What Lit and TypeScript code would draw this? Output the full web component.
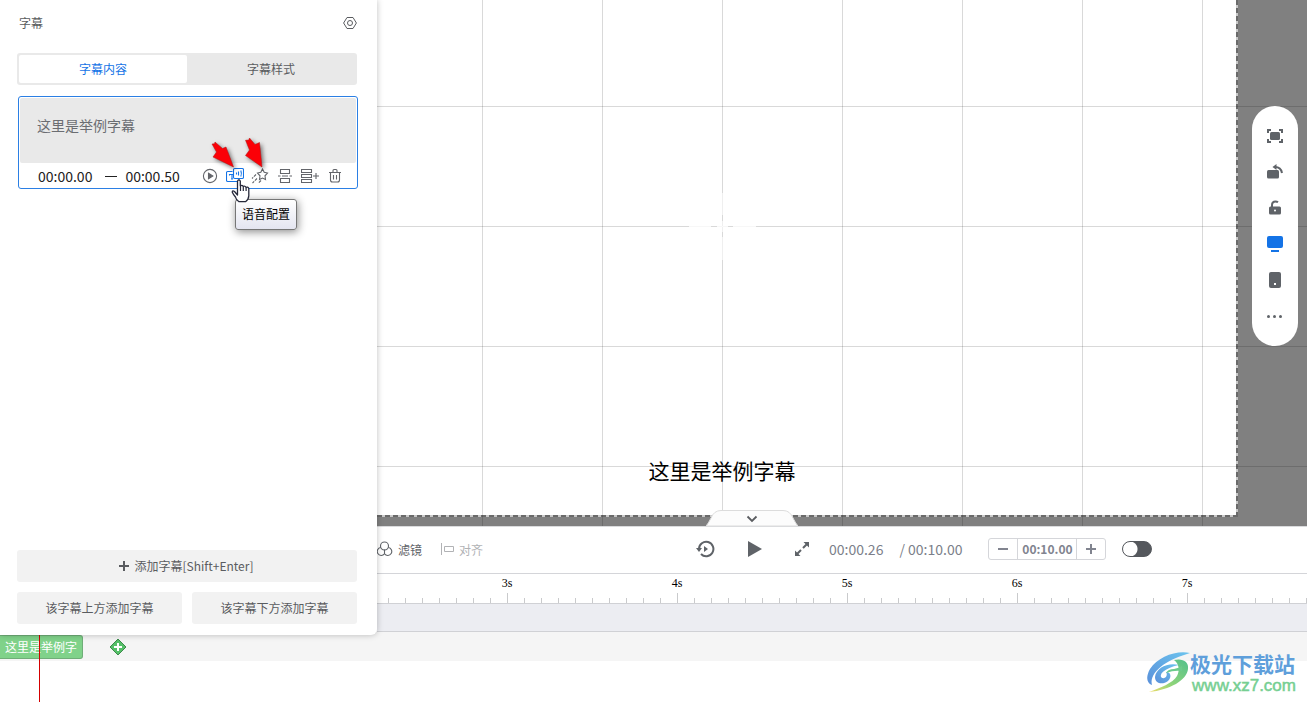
import { LitElement, html, css, svg } from "lit";
import { customElement, property, state } from "lit/decorators.js";
import { classMap } from "lit/directives/class-map.js";

const rowIcons = [
  {
    name: "播放",
    art: svg`<circle cx="9" cy="9" r="6.6"/><path d="M7.5 6.3v5.4L11.8 9z" fill="currentColor"/>`,
  },
  {
    name: "语音配置",
    art: svg`<path d="M6.5 4.500H1.700Q.5 4.500 .5 5.700v7.600q0 1.200 1.200 1.200h10.100q1.200 0 1.200-1.200V12.500"/><path d="M3.500 8.500v-1h5v1M6 7.500v4.500M5 12h2"/><rect x="7.500" y="1.500" width="10" height="10" rx="1.200" fill="#fff"/><path d="M10.500 5.500v2M12.500 4.500v4M14.800 3.500q1.200 3 0 6"/>`,
  },
  {
    name: "特效",
    art: svg`<path d="M11.500 2l1.700 3.300 3.300.7-2.500 2.800.5 3.700-3-1.500-3 1.500.5-3.700L6.500 6l3.300-.7z"/><path d="M5 7.500L1 11.500M6 11.500l-4.500 4.500M10 13.500L7.500 16" stroke-dasharray="3 1"/>`,
  },
  {
    name: "拆分",
    art: svg`<path d="M4.500 6.500v-4h9v4zM4.500 15.500v-4h9v4zM2 9h2.500M6 9h6M13.500 9H16"/>`,
  },
  {
    name: "合并",
    art: svg`<path d="M.5 2.500h10v3h-10zM.5 7.500h10v3h-10zM.5 12.500h10v3h-10zM12 9h6M15 6v6"/>`,
  },
  {
    name: "删除",
    art: svg`<path d="M3 5.500h12M7 5.500v-2q0-1 1-1h2q1 0 1 1v2M4.500 5.500v7.500q0 2 2 2h5q2 0 2-2V5.500M7.500 8v4.500M10.500 8v4.500"/>`,
  },
];

const toolIcons = [
  {
    name: "适应画布",
    art: svg`<rect x="4" y="5" width="10" height="8" rx="1.500"/><path d="M2 6V3h3M13 3h3v3M16 12v3h-3M5 15H2v-3" fill="none" stroke="currentColor" stroke-width="2"/>`,
  },
  {
    name: "旋转",
    art: svg`<rect x="1" y="7" width="12" height="8.500" rx="1.500"/><path d="M9 4q6 0 7 6" fill="none" stroke="currentColor" stroke-width="2"/><path d="M6.500 4L10.500 1v6z"/>`,
  },
  {
    name: "解锁",
    art: svg`<path d="M6 8V6q0-3.500 3.500-3.500 1.500 0 2.500.8" fill="none" stroke="currentColor" stroke-width="2"/><rect x="3" y="7.500" width="12" height="8" rx="1.500"/><circle cx="9" cy="11.500" r="1" fill="#fff"/>`,
  },
  {
    name: "电脑",
    art: svg`<rect x="1" y="1" width="16" height="12" rx="2"/><path d="M5 15h8v2H5z"/>`,
  },
  {
    name: "手机",
    art: svg`<rect x="3" y="1" width="12" height="16" rx="2"/><rect x="8" y="12" width="2" height="2" fill="#fff"/>`,
  },
  {
    name: "更多",
    art: svg`<circle cx="2.500" cy="9.500" r="1.500"/><circle cx="8.500" cy="9.500" r="1.500"/><circle cx="14.500" cy="9.500" r="1.500"/>`,
  },
];

const base = css`
  * {
    box-sizing: border-box;
  }
  button {
    border: 0;
    padding: 0;
    margin: 0;
    background: none;
    color: inherit;
    font: inherit;
    cursor: pointer;
  }
  svg {
    display: block;
  }
`;

@customElement("subtitle-panel")
export class SubtitlePanel extends LitElement {
  static styles = [
    base,
    css`
      :host {
        display: flex;
        flex-direction: column;
        padding: 0 20px 11px 17px;
        background: #fff;
        border-bottom-right-radius: 6px;
        box-shadow: 0 0 6px rgba(0, 0, 0, 0.25);
        color: #5a5c60;
        font-size: 12px;
      }
      .head {
        display: flex;
        align-items: center;
        justify-content: space-between;
        height: 45px;
        padding-left: 2px;
        margin-bottom: 8px;
      }
      .head h2 {
        margin: 0;
        font-size: 12px;
        font-weight: 400;
      }
      .tabs {
        display: flex;
        height: 32px;
        padding: 2px;
        border-radius: 3px;
        background: #e9e9e9;
        margin-bottom: 11px;
      }
      .tabs button {
        flex: 1;
        padding-bottom: 2px;
        border-radius: 2px;
      }
      .tabs .active {
        background: #fff;
        color: #1473e6;
      }
      .card {
        position: relative;
        border: 1px solid #2b7fe4;
        border-radius: 3px;
        padding: 1px;
        margin: 0 -1px 0 1px;
        height: 93px;
      }
      .card textarea {
        display: block;
        width: 100%;
        height: 65px;
        margin: 0;
        padding: 17px 17px;
        border: 0;
        outline: 0;
        resize: none;
        overflow: hidden;
        border-radius: 2px;
        background: #e9e9e9;
        color: #6b6d72;
        font: inherit;
        font-size: 14px;
        line-height: 20px;
      }
      .meta {
        display: flex;
        align-items: center;
        height: 26px;
        padding: 0 12px 0 18px;
        color: #222;
        font-size: 14px;
      }
      .dash {
        width: 12px;
        height: 1px;
        margin: 0 8px 0 13px;
        background: #222;
      }
      .acts {
        display: flex;
        gap: 7px;
        margin-left: auto;
        color: #63656a;
      }
      .acts .hot {
        color: #1473e6;
      }
      .arrows,
      .cursor,
      .tip {
        position: absolute;
        pointer-events: none;
      }
      .arrows {
        left: 188px;
        top: 37px;
        filter: drop-shadow(2px 2px 2px rgba(0, 0, 0, 0.5));
      }
      .cursor {
        left: 212px;
        top: 81px;
        z-index: 2;
      }
      .tip {
        left: 216px;
        top: 102px;
        padding: 5px 6px 7px;
        border: 1px solid #767676;
        border-radius: 3px;
        background: linear-gradient(#fff, #e4e5f0);
        box-shadow: 1px 2px 8px rgba(0, 0, 0, 0.45);
        color: #000;
        line-height: 17px;
      }
      .foot {
        display: grid;
        grid-template-columns: 1fr 1fr;
        gap: 10px;
        margin-top: auto;
      }
      .foot button {
        display: flex;
        align-items: center;
        justify-content: center;
        gap: 5px;
        height: 32px;
        padding-bottom: 1px;
        border-radius: 3px;
        background: #f2f2f2;
      }
      .foot .wide {
        grid-column: 1 / -1;
        padding-right: 3px;
      }
    `,
  ];

  @state() private tab = 0;

  render() {
    return html`
      <header class="head">
        <h2>字幕</h2>
        <button aria-label="设置">
          <svg width="14" height="14" viewBox="0 0 14 14" fill="none" stroke="currentColor">
            <path d="M4 1.500h6L13.400 7 10 12.500H4L.6 7z" stroke-linejoin="round" />
            <circle cx="7" cy="7" r="2.500" />
          </svg>
        </button>
      </header>
      <div class="tabs" role="tablist">
        ${["字幕内容", "字幕样式"].map(
          (t, i) => html`<button
            role="tab"
            aria-selected=${this.tab === i}
            class=${classMap({ active: this.tab === i })}
            @click=${() => (this.tab = i)}
          >${t}</button>`
        )}
      </div>
      <section class="card">
        <textarea aria-label="字幕文本" .value=${"这里是举例字幕"}></textarea>
        <div class="meta">
          <span>00:00.00</span><span class="dash"></span><span>00:00.50</span>
          <div class="acts">
            ${rowIcons.map(
              (r, i) => html`<button class=${classMap({ hot: i === 1 })} aria-label=${r.name}>
                <svg width="18" height="18" viewBox="0 0 18 18" fill="none" stroke="currentColor" stroke-width="1.100">${r.art}</svg>
              </button>`
            )}
          </div>
        </div>
        <svg class="arrows" width="66" height="38" viewBox="0 0 66 38">
          <g fill="#fb0007" stroke="#b01212" stroke-width=".5">
            <path d="M26.500 33L19 13l-3.500 1.500L8 8l-.5 1.700L5 10l4.500 8L6 23z" />
            <path d="M55 33L52.500 8.500 48 10.500 42.500 4l-.7 2-3.300.3L42.500 16l-4 5.500z" />
          </g>
        </svg>
        <svg class="cursor" width="20" height="26" viewBox="0 0 20 26">
          <path
            d="M6.500 17L3.500 13.500Q1.500 12 1.200 14q1 2.500 3.300 5 .5 3 3.500 4.700h6.500q3-2 3.300-6V10.300q-1.200-2-2.800-.8-1-2-2.800-1-1-1.700-2.900-.7V3q-1.400-2.200-2.800 0z"
            fill="#fff" stroke="#26283a" stroke-width="1.300" stroke-linejoin="round"
          />
          <path d="M9.500 8v5M12.300 9v4M15.100 10v3" stroke="#26283a" stroke-width="1.200" />
        </svg>
        <div class="tip" role="tooltip">语音配置</div>
      </section>
      <footer class="foot">
        <button class="wide">
          <svg width="12" height="12" viewBox="0 0 12 12"><path d="M6 1v10M1 6h10" stroke="currentColor" stroke-width="2" /></svg>
          <span>添加字幕[Shift+Enter]</span>
        </button>
        <button>该字幕上方添加字幕</button>
        <button>该字幕下方添加字幕</button>
      </footer>
    `;
  }
}

@customElement("canvas-stage")
export class CanvasStage extends LitElement {
  static styles = [
    base,
    css`
      :host {
        position: relative;
        display: flex;
        padding: 0 69px 9px 0;
        background: #808080;
        overflow: hidden;
      }
      :host::after {
        content: "";
        position: absolute;
        inset: 0;
        pointer-events: none;
        background-image: linear-gradient(90deg, rgba(0, 0, 0, 0.15) 1px, transparent 1px),
          linear-gradient(rgba(0, 0, 0, 0.15) 1px, transparent 1px);
        background-size: 120px 120px;
        background-position: 105px 106px;
      }
      .canvas {
        flex: 1;
        position: relative;
        background: #fff;
      }
      .edge {
        position: absolute;
        right: 0;
        bottom: 0;
      }
      .right {
        top: 0;
        width: 2px;
        background: repeating-linear-gradient(#6a6a6a 0 5px, #c8c8c8 5px 8px);
      }
      .bottom {
        left: 0;
        height: 2px;
        background: repeating-linear-gradient(90deg, #6a6a6a 0 5px, #c8c8c8 5px 8px);
      }
      .center {
        position: absolute;
        z-index: 1;
        left: 312px;
        top: 193px;
      }
      .caption {
        position: absolute;
        z-index: 1;
        left: 345px;
        bottom: 31px;
        transform: translateX(-50%);
        color: #000;
        font-size: 21px;
        line-height: 32px;
        white-space: nowrap;
      }
      .tools {
        position: absolute;
        z-index: 2;
        right: 9px;
        top: 106px;
        display: flex;
        flex-direction: column;
        align-items: center;
        gap: 18px;
        width: 46px;
        padding: 21px 0;
        border-radius: 23px;
        background: #fff;
        color: #5f6368;
      }
      .tools .on {
        color: #1473e6;
      }
      .fold {
        position: absolute;
        z-index: 2;
        left: 329px;
        bottom: 0;
      }
    `,
  ];

  render() {
    return html`
      <div class="canvas">
        <div class="edge right"></div>
        <div class="edge bottom"></div>
        <div class="caption">这里是举例字幕</div>
      </div>
      <svg class="center" width="67" height="67" viewBox="0 0 67 67" stroke="#fff">
        <path d="M0 33.500h22M28 33.500h11M44 33.500h23" opacity=".8" />
        <path d="M33.500 0v22M33.500 28v11M33.500 44v23" opacity=".6" />
      </svg>
      <nav class="tools">
        ${toolIcons.map(
          (t, i) => html`<button class=${classMap({ on: i === 3 })} aria-label=${t.name}>
            <svg width="18" height="18" viewBox="0 0 18 18" fill="currentColor">${t.art}</svg>
          </button>`
        )}
      </nav>
      <button class="fold" aria-label="收起">
        <svg width="92" height="16" viewBox="0 0 92 16">
          <path d="M0 16Q2 14 5 8 8 .5 15 .5h62q7 0 10 7.500 3 6 5 8z" fill="#fcfcfc" stroke="#dcdcdc" />
          <path d="M41.500 6.500L46 11l4.500-4.500" fill="none" stroke="#5a5c60" stroke-width="1.800" />
        </svg>
      </button>
    `;
  }
}

@customElement("transport-bar")
export class TransportBar extends LitElement {
  static styles = [
    base,
    css`
      :host {
        display: flex;
        align-items: center;
        box-sizing: border-box;
        padding-bottom: 2px;
        border-top: 1px solid #dadbdd;
        border-bottom: 1px solid #d4d5d9;
        background: #fff;
        color: #5f6368;
        white-space: nowrap;
        overflow: hidden;
      }
      button {
        display: flex;
        align-items: center;
        gap: 5px;
        flex: none;
      }
      .left {
        display: flex;
        flex: 0 0 318px;
        gap: 18px;
      }
      .left .off {
        color: #b1b2b5;
      }
      .play {
        display: flex;
        align-items: center;
        gap: 33px;
        margin-right: 20px;
      }
      .time {
        display: flex;
        gap: 16px;
        margin-right: 26px;
        color: #7c7f8a;
        font-size: 14px;
      }
      .zoom {
        display: flex;
        height: 22px;
        margin-right: 16px;
        border: 1px solid #d5d6da;
        border-radius: 3px;
        color: #81848f;
        font-size: 12px;
        font-weight: 700;
      }
      .zoom button {
        justify-content: center;
        width: 28px;
      }
      .zoom output {
        width: 60px;
        border: solid #d5d6da;
        border-width: 0 1px;
        line-height: 20px;
        text-align: center;
      }
      .switch {
        appearance: none;
        flex: none;
        width: 30px;
        height: 16px;
        margin: 0;
        border: 1px solid #55585d;
        border-radius: 8px;
        background: radial-gradient(circle at 7px 7px, #fff 7px, #55585d 8px);
      }
    `,
  ];

  render() {
    return html`
      <div class="left">
        <button>
          <svg width="16" height="16" viewBox="0 0 16 16" fill="none" stroke="currentColor" stroke-width="1.100">
            <circle cx="7.500" cy="5" r="4" /><path d="M3.700 6.500a4 4 0 1 0 3.800 6.300 4 4 0 1 0 3.800-6.300M7.500 8.500v4.500" />
          </svg>
          <span>滤镜</span>
        </button>
        <button class="off" disabled>
          <svg width="14" height="14" viewBox="0 0 14 14" fill="none" stroke="currentColor"><path d="M1.500 1v12M4.500 4.500h9v5h-9z" /></svg>
          <span>对齐</span>
        </button>
      </div>
      <div class="play">
        <button aria-label="重播">
          <svg width="20" height="18" viewBox="0 0 20 18" fill="none" stroke="currentColor" stroke-width="2">
            <path d="M4 9a7.200 7.200 0 1 1 2 5" /><path d="M1 8h6L4 12zM9 6v6l4-3z" fill="currentColor" stroke="none" />
          </svg>
        </button>
        <button aria-label="播放">
          <svg width="14" height="16" viewBox="0 0 14 16"><path d="M0 0v16l14-8z" fill="currentColor" /></svg>
        </button>
        <button aria-label="全屏">
          <svg width="14" height="14" viewBox="0 0 14 14" fill="currentColor">
            <path d="M8.500 0H14v5.500zM0 8.500V14h5.500z" /><path d="M8 6l4-4M2 12l4-4" stroke="currentColor" stroke-width="2" />
          </svg>
        </button>
      </div>
      <div class="time"><span>00:00.26</span><span>/ 00:10.00</span></div>
      <div class="zoom">
        <button aria-label="缩小"><svg width="12" height="12"><path d="M1 6h10" stroke="currentColor" stroke-width="2" /></svg></button>
        <output>00:10.00</output>
        <button aria-label="放大"><svg width="12" height="12"><path d="M1 6h10M6 1v10" stroke="currentColor" stroke-width="2" /></svg></button>
      </div>
      <input class="switch" type="checkbox" role="switch" aria-label="吸附" />
    `;
  }
}

@customElement("time-ruler")
export class TimeRuler extends LitElement {
  @property({ type: Number }) from = 3;
  @property({ type: Number }) to = 7;

  static styles = css`
    :host {
      display: flex;
      overflow: hidden;
      background: #fff;
      border-bottom: 1px solid #d0d1d5;
    }
    .lead,
    .rest,
    .second {
      background: repeating-linear-gradient(90deg, #c9cacc 0 1px, transparent 1px 17px) 0 100% / 170px 5px repeat-x;
    }
    .lead {
      flex: 0 0 45px;
      background-position: 100% 100%;
    }
    .rest {
      flex: 1;
    }
    .second {
      flex: none;
      width: 170px;
      font: 12px/14px "Liberation Serif", serif;
      color: #000;
      text-align: center;
      padding-top: 2px;
      background: linear-gradient(#c9cacc, #c9cacc) 85px 100% / 1px 10px no-repeat,
        repeating-linear-gradient(90deg, #c9cacc 0 1px, transparent 1px 17px) 0 100% / 170px 5px no-repeat;
    }
  `;

  render() {
    const seconds = Array.from({ length: this.to - this.from + 1 }, (_, i) => this.from + i);
    return html`
      <div class="lead"></div>
      ${seconds.map((s) => html`<div class="second">${s}s</div>`)}
      <div class="rest"></div>
    `;
  }
}

@customElement("app-root")
export class AppRoot extends LitElement {
  static styles = [
    base,
    css`
      :host {
        display: grid;
        grid-template-columns: 377px minmax(0, 1fr);
        grid-template-rows: minmax(0, 1fr) 48px 30px 28px 29px 41px;
        height: 100vh;
        overflow: hidden;
        background: #fff;
        font-family: "Noto Sans CJK SC", sans-serif;
        font-size: 12px;
      }
      subtitle-panel {
        grid-area: 1 / 1 / 5 / 2;
        margin-bottom: -3px;
        z-index: 3;
      }
      canvas-stage {
        grid-area: 1 / 2;
      }
      transport-bar {
        grid-area: 2 / 2;
      }
      time-ruler {
        grid-area: 3 / 2;
      }
      .lane {
        grid-area: 4 / 2;
        background: #ecedf2;
        border-bottom: 1px solid #d0d1d5;
      }
      .track {
        grid-area: 5 / 1 / 6 / 3;
        display: flex;
        align-items: center;
        gap: 26px;
        padding-top: 1px;
        background: #f5f5f5;
      }
      .clip {
        width: 83px;
        height: 24px;
        padding: 0 0 1px 5px;
        border: 1px solid #6fae78;
        border-left: 0;
        border-radius: 0 3px 3px 0;
        background: #80d28a;
        color: #fff;
        text-align: left;
      }
      .playhead {
        grid-area: 5 / 1 / 7 / 2;
        width: 1px;
        margin: 3px 0 0 39px;
        background: #d40000;
      }
      .brand {
        grid-area: 5 / 2 / 7 / 3;
        justify-self: end;
        align-self: end;
        display: flex;
        align-items: center;
        margin: 0 11px 7px 0;
      }
      .brand p {
        margin: 0;
        color: #5f9fdb;
        font-size: 21px;
        font-weight: 700;
        line-height: 28px;
      }
      .brand a {
        display: block;
        padding-left: 2px;
        color: #76cf92;
        font: 17px/18px "Liberation Sans", sans-serif;
        -webkit-text-stroke: 0.500px #76cf92;
        text-decoration: none;
      }
    `,
  ];

  render() {
    return html`
      <subtitle-panel></subtitle-panel>
      <canvas-stage></canvas-stage>
      <transport-bar></transport-bar>
      <time-ruler from="3" to="7"></time-ruler>
      <div class="lane"></div>
      <div class="track">
        <button class="clip">这里是举例字</button>
        <button aria-label="添加片段">
          <svg width="18" height="18" viewBox="0 0 18 18">
            <path d="M9 1l8 8-8 8-8-8z" fill="#55bf68" stroke="#3d8b4b" stroke-linejoin="round" />
            <path d="M9 5v8M5 9h8" stroke="#fff" stroke-width="2" />
          </svg>
        </button>
      </div>
      <div class="playhead"></div>
      <div class="brand">
        <svg width="44" height="42" viewBox="0 0 44 42">
          <defs>
            <linearGradient id="sky" x1="1" y1="0" x2="0" y2="1">
              <stop offset="0" stop-color="#6cc4ee" /><stop offset="1" stop-color="#5a90da" />
            </linearGradient>
            <linearGradient id="leaf" x1="1" y1="0" x2="0" y2="1">
              <stop offset="0" stop-color="#52c08c" /><stop offset=".6" stop-color="#8fd479" /><stop offset="1" stop-color="#f0dc68" />
            </linearGradient>
          </defs>
          <path d="M44 2C30-1 12 6 4 18 0 25 0 32 6 34 4 27 9 20 17 14 24 9 34 5 44 2z" fill="url(#sky)" />
          <path d="M33 14C22 11 10 17 9 26 9 33 17 34 22 30 26 26 25 21 20 21 22 24 20 28 16 27 12 24 18 17 33 14z" fill="url(#sky)" />
          <path d="M28 9C37 7 43 11 42 18 41 29 24 39 3 41 14 37 27 32 31 25 34 19 33 13 28 9z" fill="url(#leaf)" />
          <path d="M36 15Q33 17 28 18 22 18 20 22 28 19 36 20z" fill="#6ccb8c" />
        </svg>
        <div><p>极光下载站</p><a href="#">www.xz7.com</a></div>
      </div>
    `;
  }
}
